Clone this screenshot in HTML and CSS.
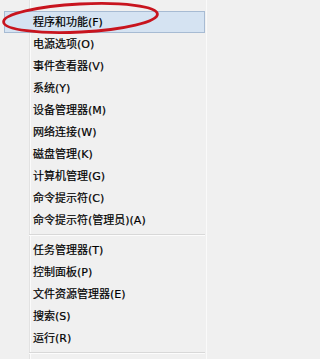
FILE: index.html
```html
<!DOCTYPE html>
<html lang="zh-CN">
<head>
<meta charset="utf-8">
<title>菜单</title>
<link rel="stylesheet" href="styles.css">
</head>
<body>
<div class="menu">
  <ul class="group">
    <li class="item active">程序和功能(F)</li>
    <li class="item">电源选项(O)</li>
    <li class="item">事件查看器(V)</li>
    <li class="item">系统(Y)</li>
    <li class="item">设备管理器(M)</li>
    <li class="item">网络连接(W)</li>
    <li class="item">磁盘管理(K)</li>
    <li class="item">计算机管理(G)</li>
    <li class="item">命令提示符(C)</li>
    <li class="item">命令提示符(管理员)(A)</li>
  </ul>
  <div class="sep"></div>
  <ul class="group">
    <li class="item">任务管理器(T)</li>
    <li class="item">控制面板(P)</li>
    <li class="item">文件资源管理器(E)</li>
    <li class="item">搜索(S)</li>
    <li class="item">运行(R)</li>
  </ul>
  <div class="sep"></div>
  <svg class="circle" width="207" height="40" viewBox="0 0 207 40" aria-hidden="true">
    <ellipse cx="80.5" cy="18" rx="77" ry="14" transform="rotate(-3 80.5 18)" fill="none" stroke="#c8141e" stroke-width="2.8"/>
  </svg>
</div>
</body>
</html>
```
FILE: styles.css
```css
html, body {
  margin: 0;
  padding: 0;
  height: 100%;
}
body {
  background: #f0f0f0;
  font-family: "DejaVu Sans", "Noto Sans CJK SC", sans-serif;
  font-size: 11px;
  color: #000;
  overflow: hidden;
}
.menu {
  position: relative;
  box-sizing: border-box;
  width: 207px;
  height: 100%;
  padding-top: 11px;
  background: linear-gradient(to right,
    #f0f0f0 0, #f0f0f0 29px,
    #e2e2e2 29px, #e2e2e2 30px,
    #fbfbfb 30px, #fbfbfb 31px,
    #f0f0f0 31px);
  border-right: 1px solid #fafafa;
}
.group {
  list-style: none;
  margin: 0;
  padding: 0;
}
.item {
  box-sizing: border-box;
  height: 22px;
  line-height: 22px;
  margin: 0 1px 0 4px;
  padding-left: 28px;
  border: 1px solid transparent;
  white-space: nowrap;
  -webkit-text-stroke: 0.2px #000;
}
.item.active {
  background: #d5e3f2;
  border-color: #a7bbd3;
}
.sep {
  height: 8px;
  margin-left: 29px;
  margin-right: 1px;
  background: linear-gradient(to bottom,
    transparent 0, transparent 3px,
    #d8d8d8 3px, #d8d8d8 4px,
    #fcfcfc 4px, #fcfcfc 5px,
    transparent 5px);
}
.circle {
  position: absolute;
  left: 0;
  top: 0;
}
```
